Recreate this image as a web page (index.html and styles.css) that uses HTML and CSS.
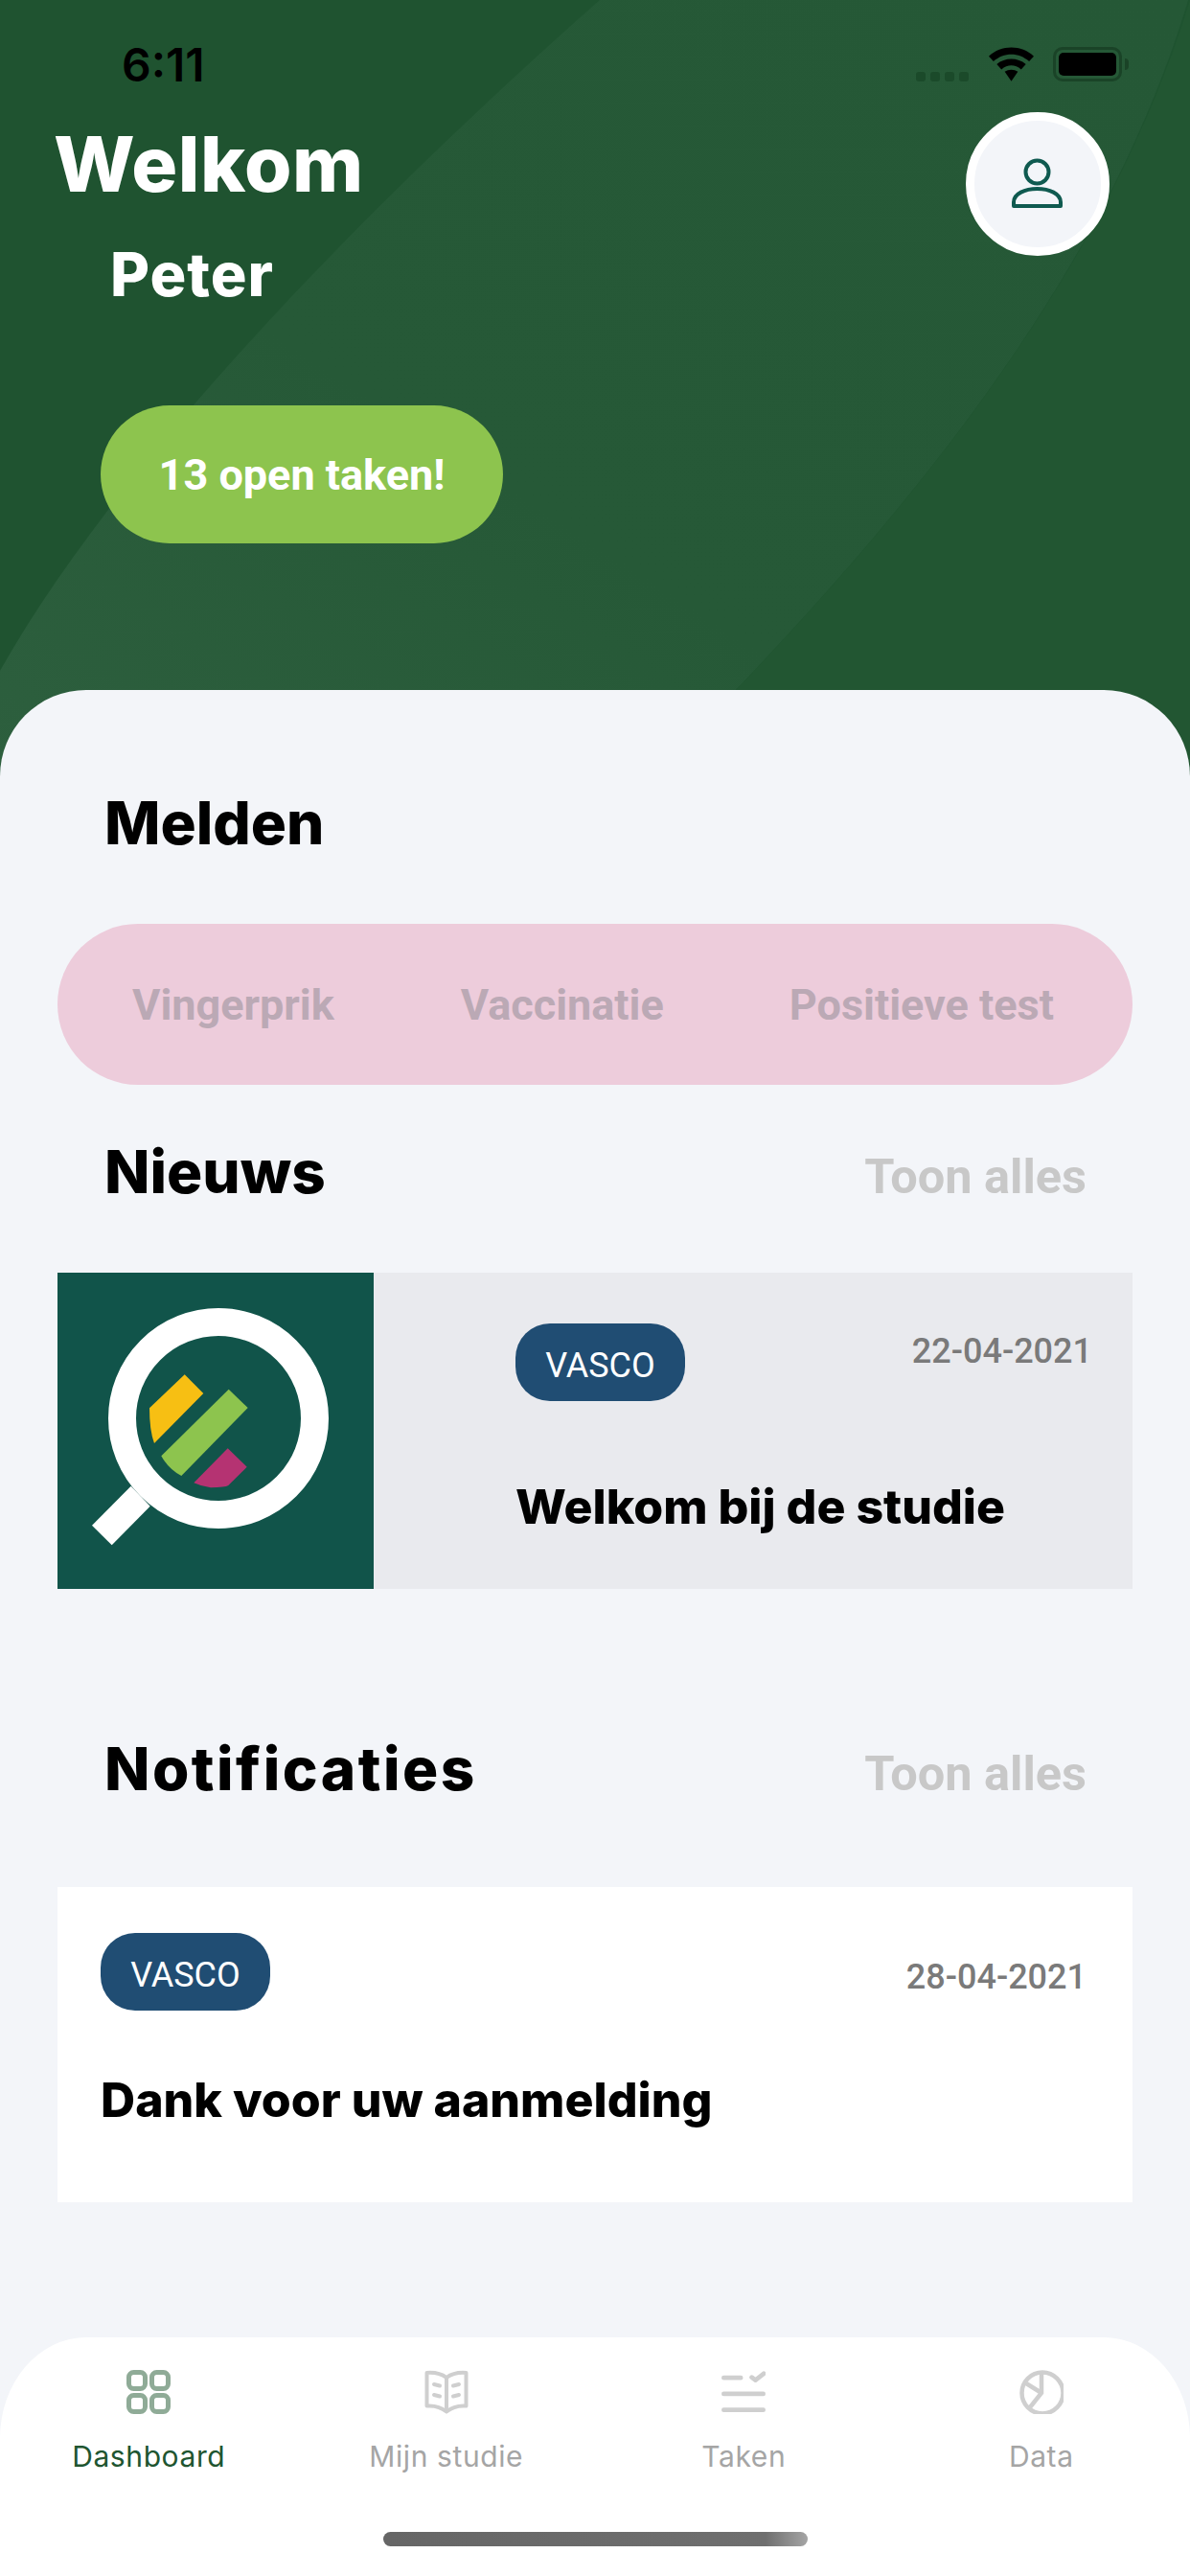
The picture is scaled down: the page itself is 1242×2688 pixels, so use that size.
FILE: index.html
```html
<!DOCTYPE html>
<html lang="nl">
<head>
    <meta charset="UTF-8">
    <meta name="viewport" content="width=device-width, initial-scale=1.0">
    <title>Dashboard</title>
    <link rel="stylesheet" href="styles.css">
</head>
<body>
    <div class="app">
        <div class="hero">
            <svg class="hero-bg" viewBox="0 0 1242 810" preserveAspectRatio="none">
                <defs>
                    <linearGradient id="swoosh" x1="0" y1="1" x2="1" y2="0">
                        <stop offset="0" stop-color="#2d5f3e"/>
                        <stop offset="0.4" stop-color="#265937"/>
                        <stop offset="1" stop-color="#255836"/>
                    </linearGradient>
                </defs>
                <rect width="1242" height="810" fill="#1f5330"/>
                <path d="M626 0 C400 200 130 470 0 700 L0 810 L680 810 C930 560 1150 300 1240 0 Z" fill="url(#swoosh)"/>
                <path d="M1242 0 C1150 300 930 560 680 810 L1242 810 Z" fill="#225632"/>
            </svg>

            <div class="status">
                <span class="time">6:11</span>
                <div class="status-icons">
                    <div class="signal"><i></i><i></i><i></i><i></i></div>
                    <svg class="wifi" viewBox="0 0 48 36">
                        <path d="M0 9.5 C13 -3 35 -3 48 9.5 L43 15 C32 5 16 5 5 15 Z"/>
                        <path d="M8.5 18 C17 10.500 31 10.500 39.500 18 L34.500 23.500 C28 18 20 18 13.500 23.500 Z"/>
                        <path d="M17 26 C21 23 27 23 31 26 L24 36 Z"/>
                    </svg>
                    <div class="battery"><div class="battery-level"></div></div>
                    <div class="battery-nub"></div>
                </div>
            </div>

            <div class="hero-top">
                <div class="greeting">
                    <h1>Welkom</h1>
                    <h2>Peter</h2>
                </div>
                <div class="avatar">
                    <svg viewBox="0 0 60 60" width="60" height="60" fill="none" stroke="#0f5a50" stroke-width="4">
                        <circle cx="29.500" cy="17.500" r="12"/>
                        <path d="M5 53 V49 C5 40 17 35 29.500 35 S54 40 54 49 V53 Z" stroke-linejoin="round"/>
                    </svg>
                </div>
            </div>

            <div class="tasks-pill">13 open taken!</div>
        </div>

        <div class="sheet">
            <h3 class="melden-title">Melden</h3>
            <div class="report-bar">
                <span>Vingerprik</span>
                <span>Vaccinatie</span>
                <span>Positieve test</span>
            </div>

            <div class="section-head news-head">
                <h3>Nieuws</h3>
                <a class="show-all">Toon alles</a>
            </div>
            <div class="news-card">
                <div class="news-image">
                    <svg viewBox="0 0 330 330" width="330" height="330">
                        <circle cx="168" cy="152" r="100.500" fill="none" stroke="#fff" stroke-width="29"/>
                        <polygon points="76.700,222.700 96.700,243.700 56.700,284.300 36,263.700" fill="#fff"/>
                        <path d="M132.700 106.300 L152.300 126 L101 178 Q96 165 96 141.300 Z" fill="#f7bf13"/>
                        <path d="M178.700 121.700 L198.700 141 L129.300 212 Q116 205 108.300 191.300 Z" fill="#8dc44e"/>
                        <path d="M177.700 183.300 L197.700 202.700 L178.300 222 Q175 224 160 224.300 Q150 223 142.300 219.300 Z" fill="#b53372"/>
                    </svg>
                </div>
                <div class="news-body">
                    <div class="card-meta">
                        <span class="badge">VASCO</span>
                        <span class="date">22-04-2021</span>
                    </div>
                    <div class="card-title">Welkom bij de studie</div>
                </div>
            </div>

            <div class="section-head notif-head">
                <h3>Notificaties</h3>
                <a class="show-all">Toon alles</a>
            </div>
            <div class="notif-card">
                <div class="card-meta">
                    <span class="badge">VASCO</span>
                    <span class="date">28-04-2021</span>
                </div>
                <div class="card-title">Dank voor uw aanmelding</div>
            </div>

            <div class="tabbar">
                <div class="tabs">
                    <div class="tab active">
                        <svg viewBox="0 0 46 46" fill="none" stroke="#8fab97" stroke-width="5">
                            <rect x="2.500" y="2.500" width="17" height="17" rx="5"/>
                            <rect x="26.500" y="2.500" width="17" height="17" rx="5"/>
                            <rect x="2.500" y="26.500" width="17" height="17" rx="5"/>
                            <rect x="26.500" y="26.500" width="17" height="17" rx="5"/>
                        </svg>
                        <span>Dashboard</span>
                    </div>
                    <div class="tab">
                        <svg viewBox="0 0 46 46" fill="none" stroke="#cfcfcf" stroke-width="4" stroke-linecap="round" stroke-linejoin="round">
                            <path d="M23 8 C17 3.500 9 2.500 2.500 3 V37.500 C9 37 17 38.500 23 43.500 C29 38.500 37 37 43.500 37.500 V3 C37 2.500 29 3.500 23 8 Z M23 8 V43"/>
                            <path d="M10 15 L16 16.500 M10 26 L16 27.500 M36 15 L30 16.500 M36 26 L30 27.500"/>
                        </svg>
                        <span>Mijn studie</span>
                    </div>
                    <div class="tab">
                        <svg viewBox="0 0 48 46" fill="none" stroke="#cfcfcf" stroke-width="5" stroke-linecap="round">
                            <path d="M2.500 7.500 H21 M2.500 25 H45.500 M2.500 42.500 H45.500"/>
                            <path d="M33 7 L37 10 L46 3" stroke-linejoin="round"/>
                        </svg>
                        <span>Taken</span>
                    </div>
                    <div class="tab">
                        <svg viewBox="0 0 46 46" fill="none" stroke="#cfcfcf" stroke-width="4.500">
                            <circle cx="24" cy="24" r="21.500"/>
                            <path d="M23 2 V24 L11 39 M23 24 L7 14"/>
                        </svg>
                        <span>Data</span>
                    </div>
                </div>
                <div class="home-indicator"></div>
            </div>
        </div>
    </div>
</body>
</html>
```

FILE: styles.css
```css
* {
    margin: 0;
    padding: 0;
    box-sizing: border-box;
}

body {
    font-family: Roboto, sans-serif;
    background: #f3f5f9;
}

.app {
    width: 1242px;
    height: 2688px;
    display: flex;
    flex-direction: column;
    overflow: hidden;
}

/* top green area */
.hero {
    position: relative;
    height: 810px;
    flex-shrink: 0;
    padding-top: 49px;
}

.hero-bg {
    position: absolute;
    top: 0;
    left: 0;
    width: 1242px;
    height: 810px;
}

.status,
.hero-top,
.tasks-pill {
    position: relative;
}

.status {
    display: flex;
    justify-content: space-between;
    height: 36px;
    padding: 0 64px 0 127px;
}

.time {
    font-family: Inter, sans-serif;
    font-size: 48px;
    font-weight: 600;
    line-height: 38px;
    color: #000;
}

.status-icons {
    display: flex;
}

.signal {
    display: flex;
    gap: 5px;
    align-items: flex-end;
    margin-right: 21px;
}

.signal i {
    width: 10px;
    height: 10px;
    border-radius: 3px;
    background: #1b4a2a;
}

.wifi {
    width: 47px;
    height: 36px;
    margin-right: 20px;
}

.battery {
    width: 72px;
    height: 36px;
    border: 3px solid #1a4327;
    border-radius: 10px;
    padding: 3px;
}

.battery-level {
    height: 100%;
    background: #000;
    border-radius: 5px;
}

.battery-nub {
    width: 4px;
    height: 12px;
    margin: 12px 0 0 3px;
    background: #1a4327;
    border-radius: 0 4px 4px 0;
}

.hero-top {
    display: flex;
    justify-content: space-between;
    margin-top: 32px;
    padding: 0 84px 0 56px;
    height: 150px;
}

.greeting h1 {
    font-family: Inter, sans-serif;
    font-size: 80px;
    font-weight: 800;
    line-height: 108px;
    letter-spacing: 0.5px;
    color: #fff;
}

.greeting h2 {
    font-family: Inter, sans-serif;
    font-size: 63px;
    font-weight: 800;
    line-height: 70px;
    letter-spacing: 1px;
    margin: 26px 0 0 59px;
    color: #fff;
}

.avatar {
    width: 150px;
    height: 150px;
    border-radius: 50%;
    border: 9px solid #fff;
    background: #f3f5f9;
    display: flex;
    align-items: center;
    justify-content: center;
}

.tasks-pill {
    width: 420px;
    height: 144px;
    margin: 156px 0 0 105px;
    border-radius: 72px;
    background: #8dc44e;
    color: #fff;
    font-size: 45px;
    font-weight: 700;
    display: flex;
    align-items: center;
    justify-content: center;
}

/* white sheet */
.sheet {
    position: relative;
    flex: 1;
    margin-top: -90px;
    border-radius: 90px 90px 0 0;
    background: #f3f5f9;
    display: flex;
    flex-direction: column;
}

h3 {
    font-family: Inter, sans-serif;
    font-size: 62px;
    font-weight: 800;
    line-height: 70px;
    color: #000;
}

.melden-title {
    margin: 104px 0 0 109px;
}

.report-bar {
    height: 168px;
    margin: 70px 60px 0;
    border-radius: 84px;
    background: #edccdb;
    display: flex;
    align-items: center;
    padding-left: 78px;
    font-size: 45px;
    font-weight: 700;
    color: #bba9b5;
}

.report-bar span:nth-child(2) {
    margin-left: 132px;
}

.report-bar span:nth-child(3) {
    margin-left: 131px;
}

.section-head {
    display: flex;
    justify-content: space-between;
    align-items: baseline;
    padding: 0 108px 0 109px;
}

.news-head {
    margin-top: 56px;
}

.notif-head {
    margin-top: 153px;
}

.notif-head h3 {
    letter-spacing: 2.500px;
}

.show-all {
    font-size: 50.500px;
    font-weight: 700;
    color: #c8c8c8;
}

.news-card {
    display: flex;
    height: 330px;
    margin: 70px 60px 0;
    background: #e9eaee;
}

.news-image {
    width: 330px;
    height: 330px;
    background: #11544a;
}

.news-body {
    flex: 1;
    padding: 53px 46px 0 148px;
}

.card-meta {
    display: flex;
    justify-content: space-between;
}

.badge {
    width: 177px;
    height: 81px;
    padding-top: 7px;
    border-radius: 36px;
    background: #204d73;
    color: #fff;
    font-size: 36px;
    font-weight: 400;
    display: flex;
    align-items: center;
    justify-content: center;
}

.date {
    font-size: 36px;
    font-weight: 500;
    line-height: 58px;
    color: #7a7a7a;
}

.card-title {
    font-family: Inter, sans-serif;
    font-size: 50px;
    font-weight: 800;
    line-height: 60px;
    color: #000;
    white-space: nowrap;
}

.news-body .card-meta {
    margin-right: -4px;
}

.news-body .card-title {
    margin-top: 80px;
}

.notif-card {
    height: 329px;
    margin: 88px 60px 0;
    padding: 48px 48px 0 45px;
    background: #fff;
}

.notif-card .date {
    line-height: 92px;
}

.notif-card .card-title {
    margin-top: 52px;
}

.tabbar {
    margin-top: auto;
    height: 249px;
    background: #fff;
    border-radius: 90px 90px 0 0 / 105px 105px 0 0;
}

.tabs {
    display: grid;
    grid-template-columns: repeat(4, 1fr);
    padding-top: 34px;
}

.tab {
    display: flex;
    flex-direction: column;
    align-items: center;
    font-family: Inter, sans-serif;
    font-size: 30px;
    line-height: 36px;
    letter-spacing: 0.6px;
    color: #a5a5a5;
}

.tab svg {
    width: 46px;
    height: 46px;
    margin-bottom: 26px;
}

.tab.active {
    color: #205530;
}

.home-indicator {
    width: 443px;
    height: 15px;
    margin: 61px 0 0 400px;
    border-radius: 8px;
    background: linear-gradient(90deg, #666 0%, #6f6f6f 90%, #a5a5a5 100%);
}
```
